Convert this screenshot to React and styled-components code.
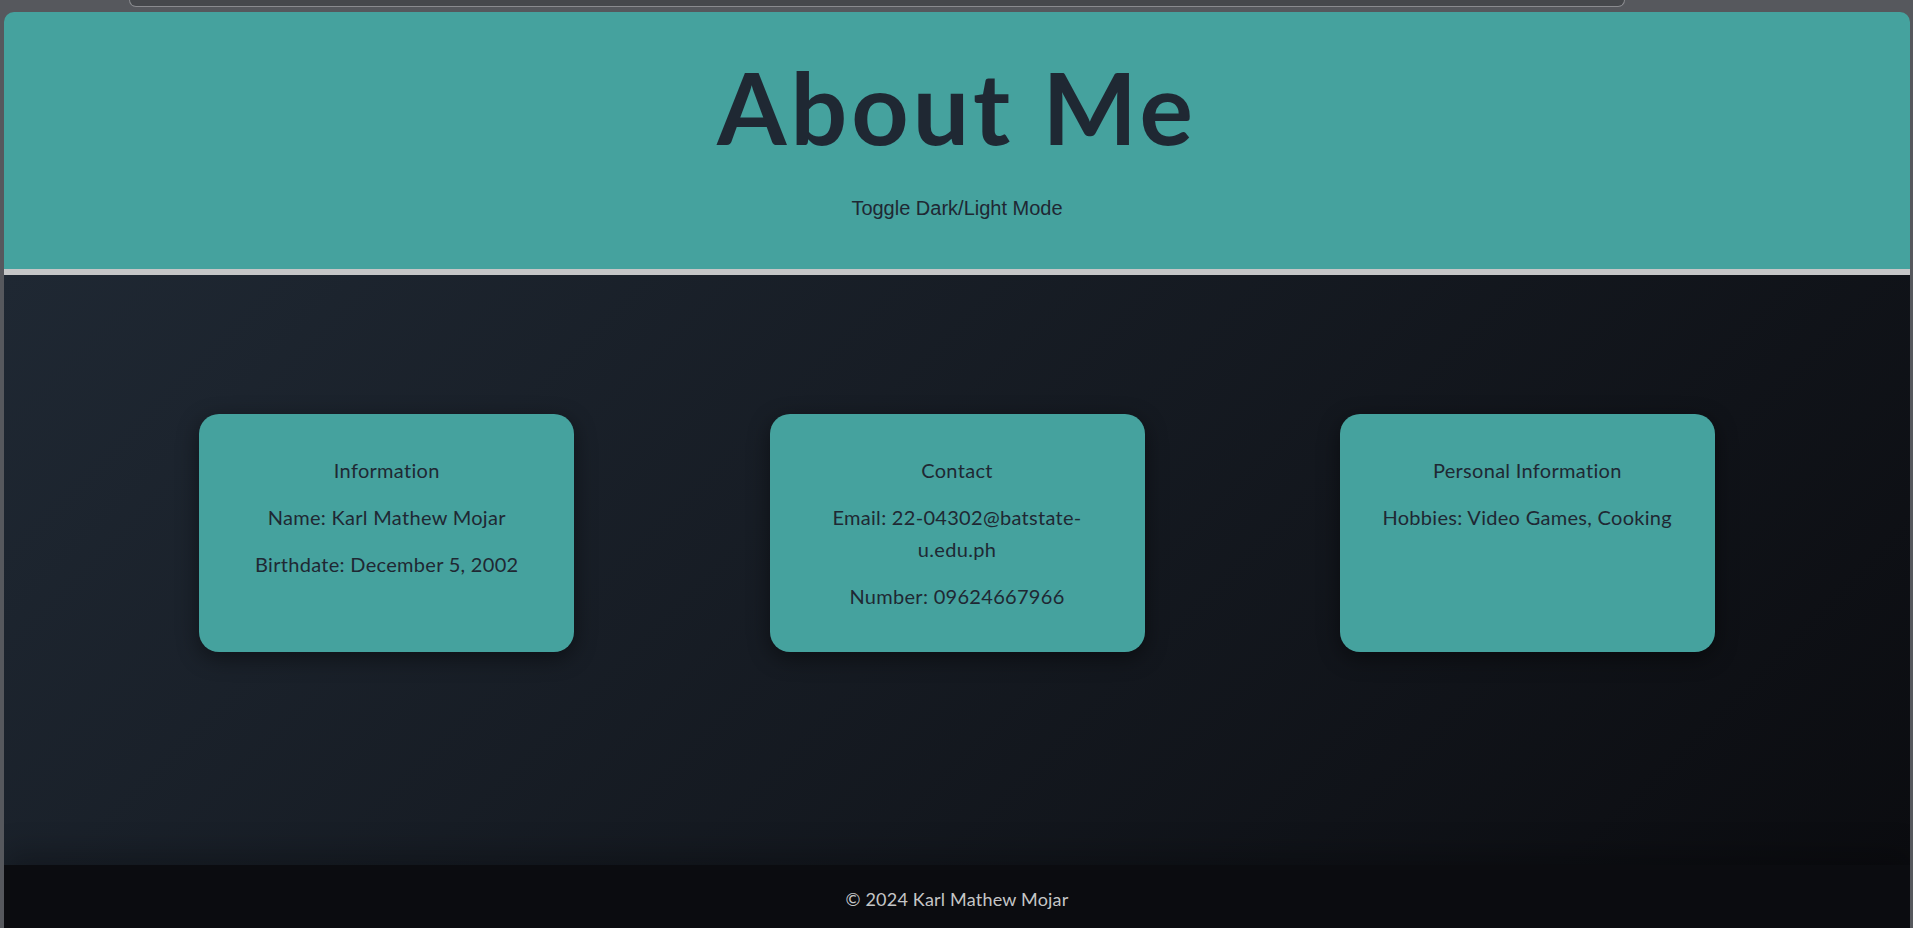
import styled, { createGlobalStyle } from "styled-components";

const GlobalStyle = createGlobalStyle`
  html, body {
    margin: 0;
    padding: 0;
    overflow: hidden;
    background: #56585d;
  }
  * {
    box-sizing: border-box;
  }
`;

const ChromeStrip = styled.div`
  height: 12px;
  padding-left: 129px;
`;

const AddressBar = styled.div`
  width: 1496px;
  height: 7px;
  background: #46484c;
  border: 1px solid #8a8b8f;
  border-top: none;
  border-radius: 0 0 10px 10px;
`;

const Page = styled.div`
  margin: 0 3px 0 4px;
  border-radius: 10px 10px 0 0;
  overflow: hidden;
  font-family: Lato, "Noto Sans", sans-serif;
`;

const Header = styled.header`
  height: 263px;
  padding-top: 34px;
  background: #45a29e;
  border-bottom: 6px solid #c5c6c7;
  text-align: center;
`;

const Title = styled.h1`
  margin: 0;
  font-size: 100px;
  line-height: 120px;
  font-weight: 700;
  letter-spacing: 4px;
  color: #1f2833;
`;

const ToggleButton = styled.button`
  margin-top: 31px;
  padding: 0;
  border: none;
  background: transparent;
  font-family: "Liberation Sans", Arial, sans-serif;
  font-size: 20px;
  color: #1f2833;
  cursor: pointer;
`;

const Main = styled.main`
  height: 590px;
  padding-top: 139px;
  background: linear-gradient(135deg, #1f2833 0%, #0b0c10 100%);
`;

const CardRow = styled.section`
  display: flex;
  justify-content: space-evenly;
  align-items: stretch;
`;

const Card = styled.div`
  width: 375px;
  padding: 40px;
  display: flex;
  flex-direction: column;
  gap: 15px;
  background: #45a29e;
  border-radius: 20px;
  box-shadow: 0 6px 22px rgba(0, 0, 0, 0.45);
  text-align: center;
`;

const CardLine = styled.p`
  margin: 0;
  font-size: 20px;
  line-height: 32px;
  letter-spacing: 0.3px;
  color: #1f2833;
`;

const Footer = styled.footer`
  padding: 23px 0;
  background: #0b0c10;
  box-shadow: 0 -12px 30px rgba(0, 0, 0, 0.25);
  text-align: center;
  color: #c5c6c7;
  font-size: 18px;
  letter-spacing: 0.2px;
`;

const cards = [
  {
    title: "Information",
    lines: ["Name: Karl Mathew Mojar", "Birthdate: December 5, 2002"],
  },
  {
    title: "Contact",
    lines: ["Email: 22-04302@batstate-u.edu.ph", "Number: 09624667966"],
  },
  {
    title: "Personal Information",
    lines: ["Hobbies: Video Games, Cooking"],
  },
];

export default function App() {
  return (
    <>
      <GlobalStyle />
      <ChromeStrip>
        <AddressBar />
      </ChromeStrip>
      <Page>
        <Header>
          <Title>About Me</Title>
          <ToggleButton>Toggle Dark/Light Mode</ToggleButton>
        </Header>
        <Main>
          <CardRow>
            {cards.map((card) => (
              <Card key={card.title}>
                <CardLine>{card.title}</CardLine>
                {card.lines.map((line) => (
                  <CardLine key={line}>{line}</CardLine>
                ))}
              </Card>
            ))}
          </CardRow>
        </Main>
        <Footer>© 2024 Karl Mathew Mojar</Footer>
      </Page>
    </>
  );
}
